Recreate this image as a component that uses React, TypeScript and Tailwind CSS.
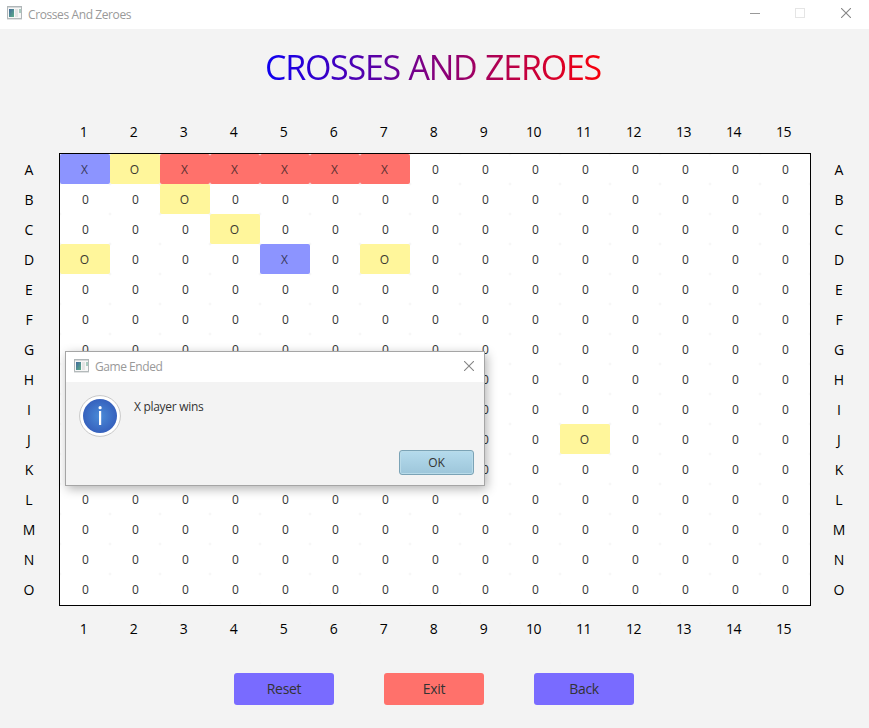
import React from "react";

const COLS = Array.from({ length: 15 }, (_, i) => i + 1);
const ROWS = "ABCDEFGHIJKLMNO".split("");

const MARKS: Record<string, "x" | "o" | "win"> = {
  A1: "x", A2: "o", A3: "win", A4: "win", A5: "win", A6: "win", A7: "win",
  B3: "o", C4: "o", D1: "o", D5: "x", D7: "o", J11: "o",
};

const MARK_STYLE = {
  x: "bg-[#8c94ff] text-[#38395a]",
  o: "bg-[#fff69b] text-[#3a3a30]",
  win: "bg-[#ff716b] text-[#5a3030]",
};

function AppIcon() {
  return (
    <svg className="block shrink-0" width="15" height="14" viewBox="0 0 15 14">
      <defs>
        <linearGradient id="screen" x1="0" y1="0" x2="1" y2="1">
          <stop offset="0" stopColor="#42699c" />
          <stop offset="1" stopColor="#5cae88" />
        </linearGradient>
      </defs>
      <rect x="0.5" y="0.5" width="14" height="12" fill="#f7f7f7" stroke="#b0b6b8" />
      <rect x="0" y="12" width="15" height="1.4" fill="#b4babb" />
      <rect x="1" y="1" width="13" height="1" fill="#d5d9da" />
      <rect x="2" y="3" width="5" height="8" fill="url(#screen)" />
      <rect x="8" y="3" width="3" height="8" fill="#e4e4e4" />
      <rect x="12" y="3" width="2" height="4" fill="#a9cbc0" />
    </svg>
  );
}

function CloseIcon() {
  return (
    <svg className="block" width="10" height="10" viewBox="0 0 10 10">
      <path d="M0 0 L10 10 M10 0 L0 10" stroke="#868686" strokeWidth="1.1" fill="none" />
    </svg>
  );
}

function ColumnLabels() {
  return (
    <div className="ml-[58.5px] flex h-5">
      {COLS.map((c) => (
        <div key={c} className="w-[50px] text-center text-[14px] leading-5 tracking-[-0.4px] text-black">{c}</div>
      ))}
    </div>
  );
}

function RowLabels() {
  return (
    <div className="w-[58px] pt-[2px]">
      {ROWS.map((r) => (
        <div key={r} className="h-[30px] text-center text-[14px] leading-[30px] text-black">{r}</div>
      ))}
    </div>
  );
}

function Cell({ id }: { id: string }) {
  const mark = MARKS[id];
  if (!mark) {
    return (
      <div className="h-[30px] rounded-[2px] bg-white pl-px text-center text-[12px] leading-[31px] text-[#333]">0</div>
    );
  }
  return (
    <div className={"h-[30px] rounded-[2px] pr-px text-center text-[12px] leading-[31px] " + MARK_STYLE[mark]}>
      {mark === "o" ? "O" : "X"}
    </div>
  );
}

function Dialog() {
  return (
    <div className="absolute left-[65px] top-[351px] h-[135px] w-[420px] border border-[#a5a5a5] bg-[#f3f3f3] shadow-[2px_3px_10px_rgba(0,0,0,0.3)]">
      <div className="flex h-[30px] items-center bg-white pb-[2px] pl-2 pr-[10px]">
        <AppIcon />
        <span className="ml-[6px] grow pt-[2px] text-[12px] leading-4 tracking-[-0.45px] text-[#999]">Game Ended</span>
        <CloseIcon />
      </div>
      <div className="flex h-[68px] pl-[13px] pt-[13px]">
        <svg className="block" width="42" height="42" viewBox="0 0 42 42">
          <defs>
            <radialGradient id="info">
              <stop offset="0" stopColor="#4a8bd8" />
              <stop offset="1" stopColor="#3661bd" />
            </radialGradient>
          </defs>
          <circle cx="21" cy="21" r="20.4" fill="#fff" stroke="#c8c8c8" />
          <circle cx="21" cy="21" r="17" fill="url(#info)" />
          <rect x="20" y="16" width="2.2" height="14" fill="#fff" />
          <circle cx="21.1" cy="12.7" r="1.6" fill="#fff" />
        </svg>
        <p className="ml-[13px] mt-[4px] text-[12px] leading-4 tracking-[-0.3px] text-[#333]">X player wins</p>
      </div>
      <div className="flex justify-end pr-[10px]">
        <button className="h-[25px] w-[75px] rounded-[3px] border border-[#7ba3b6] bg-linear-to-b from-[#b5dbed] to-[#9dc6da] text-[12px] leading-[23px] tracking-[-0.2px] text-[#333] shadow-[inset_0_0_0_1px_#b9dbe9]">
          OK
        </button>
      </div>
    </div>
  );
}

export default function App() {
  return (
    <div className="relative h-[728px] w-[869px] overflow-hidden bg-[#f3f3f3] font-['Open_Sans','Noto_Sans',sans-serif]">
      <header className="flex h-[29px] items-center bg-white pb-[3px] pl-[7px] pr-[18px]">
        <AppIcon />
        <span className="ml-[6px] grow pt-[3px] text-[12px] leading-4 tracking-[-0.4px] text-[#999]">Crosses And Zeroes</span>
        <div className="flex">
          <div className="mr-[35px] mt-[5px] h-px w-[10px] bg-[#999]" />
          <div className="mr-9 size-[10px] border border-[#e5e5e5]" />
          <CloseIcon />
        </div>
      </header>

      <h1 className="ml-[265px] mt-[14px] flex h-[49px]">
        <span className="whitespace-nowrap bg-linear-to-r/srgb from-[#0d00f2] to-[#f8000a] bg-clip-text text-[34px] leading-[48px] tracking-[-1.25px] [word-spacing:1px] text-transparent">
          CROSSES AND ZEROES
        </span>
      </h1>

      <div className="pt-[30px]">
        <ColumnLabels />
      </div>
      <div className="mt-[11px] flex">
        <RowLabels />
        <div className="ml-px h-[453px] w-[752px] border border-black bg-white">
          <div className="grid grid-cols-15 bg-[#f3f3f3]">
            {ROWS.map((r) => COLS.map((c) => <Cell key={r + c} id={r + c} />))}
          </div>
        </div>
        <div className="-ml-px">
          <RowLabels />
        </div>
      </div>
      <div className="mt-[13px]">
        <ColumnLabels />
      </div>

      <div className="mt-[34px] flex gap-[50px] pl-[234px]">
        <button className="h-8 w-[100px] rounded-[3px] bg-[#796bff] text-[14px] leading-8 tracking-[-0.3px] text-[#333]">Reset</button>
        <button className="h-8 w-[100px] rounded-[3px] bg-[#ff716b] text-[14px] leading-8 tracking-[-0.3px] text-[#333]">Exit</button>
        <button className="h-8 w-[100px] rounded-[3px] bg-[#796bff] text-[14px] leading-8 tracking-[-0.3px] text-[#333]">Back</button>
      </div>

      <Dialog />
    </div>
  );
}
